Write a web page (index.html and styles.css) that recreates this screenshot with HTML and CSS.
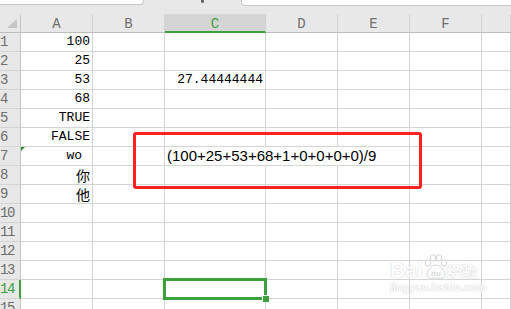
FILE: index.html
```html
<!DOCTYPE html>
<html lang="zh-CN">
<head>
    <meta charset="UTF-8">
    <title>表格</title>
    <link rel="stylesheet" href="styles.css">
</head>
<body>
    <div class="page">
        <!-- 顶部工具栏残留 -->
        <div class="topbar">
            <div class="tab tab-left"></div>
            <div class="caret"><span class="caret-dot"></span></div>
            <div class="tab tab-right"></div>
        </div>

        <!-- 表格区域 -->
        <div class="sheet">
            <div class="hd corner"><span class="tri"></span></div>
            <div class="hd">A</div>
            <div class="hd">B</div>
            <div class="hd hd-on">C</div>
            <div class="hd">D</div>
            <div class="hd">E</div>
            <div class="hd">F</div>
            <div class="hd"></div>

            <div class="rh">1</div><div class="c num">100</div><div class="c"></div><div class="c"></div><div class="c"></div><div class="c"></div><div class="c"></div><div class="c"></div>
            <div class="rh">2</div><div class="c num">25</div><div class="c"></div><div class="c"></div><div class="c"></div><div class="c"></div><div class="c"></div><div class="c"></div>
            <div class="rh">3</div><div class="c num">53</div><div class="c"></div><div class="c num">27.44444444</div><div class="c"></div><div class="c"></div><div class="c"></div><div class="c"></div>
            <div class="rh">4</div><div class="c num">68</div><div class="c"></div><div class="c"></div><div class="c"></div><div class="c"></div><div class="c"></div><div class="c"></div>
            <div class="rh">5</div><div class="c num">TRUE</div><div class="c"></div><div class="c"></div><div class="c"></div><div class="c"></div><div class="c"></div><div class="c"></div>
            <div class="rh">6</div><div class="c num">FALSE</div><div class="c"></div><div class="c"></div><div class="c"></div><div class="c"></div><div class="c"></div><div class="c"></div>
            <div class="rh">7</div><div class="c num wo"><span class="flag"></span>wo</div><div class="c"></div><div class="c formula">(100+25+53+68+1+0+0+0+0)/9</div><div class="c no-rb"></div><div class="c"></div><div class="c"></div><div class="c"></div>
            <div class="rh">8</div><div class="c num cjk">你</div><div class="c"></div><div class="c"></div><div class="c"></div><div class="c"></div><div class="c"></div><div class="c"></div>
            <div class="rh">9</div><div class="c num cjk">他</div><div class="c"></div><div class="c"></div><div class="c"></div><div class="c"></div><div class="c"></div><div class="c"></div>
            <div class="rh">10</div><div class="c"></div><div class="c"></div><div class="c"></div><div class="c"></div><div class="c"></div><div class="c"></div><div class="c"></div>
            <div class="rh">11</div><div class="c"></div><div class="c"></div><div class="c"></div><div class="c"></div><div class="c"></div><div class="c"></div><div class="c"></div>
            <div class="rh">12</div><div class="c"></div><div class="c"></div><div class="c"></div><div class="c"></div><div class="c"></div><div class="c"></div><div class="c"></div>
            <div class="rh">13</div><div class="c"></div><div class="c"></div><div class="c"></div><div class="c"></div><div class="c"></div><div class="c"></div><div class="c"></div>
            <div class="rh rh-on">14</div><div class="c"></div><div class="c"></div><div class="c"></div><div class="c"></div><div class="c"></div><div class="c"></div><div class="c"></div>
            <div class="rh">15</div><div class="c"></div><div class="c"></div><div class="c"></div><div class="c"></div><div class="c"></div><div class="c"></div><div class="c"></div>
        </div>

        <!-- 红色标注框 -->
        <div class="mark"></div>

        <!-- 选中单元格 C14 -->
        <div class="select"><span class="handle"></span></div>

        <!-- 水印 -->
        <div class="wm">
            <div class="wm-top">
                <span class="wm-bai">Bai</span>
                <svg class="wm-paw" width="24" height="26" viewBox="0 0 24 26">
                    <ellipse cx="5" cy="9" rx="2.6" ry="3.2"/>
                    <ellipse cx="10" cy="4" rx="2.6" ry="3.2"/>
                    <ellipse cx="16" cy="4" rx="2.6" ry="3.2"/>
                    <ellipse cx="21" cy="9" rx="2.6" ry="3.2"/>
                    <path d="M13 11 C8 11 3 18 4 22 C5 25 9 24 13 24 C17 24 21 25 22 22 C23 18 18 11 13 11 Z"/>
                    <text x="13" y="22" text-anchor="middle">du</text>
                </svg>
                <span class="wm-jy">经验</span>
            </div>
            <div class="wm-url">jingyan.baidu.com</div>
        </div>
    </div>
</body>
</html>
```

FILE: styles.css
```css
*{
    margin: 0;
    padding: 0;
    box-sizing: border-box;
}

body{
    background-color: #fff;
    overflow: hidden;
}

/* 整体容器 */
.page{
    position: relative;
    width: 511px;
    height: 309px;
    overflow: hidden;
    background-color: #fff;
}

/* 顶部条 */
.topbar{
    height: 14px;
    background-color: #e8e8e8;
    display: flex;
    align-items: flex-start;
}

.tab{
    height: 5px;
    background-color: #fff;
    border: 1px solid #c8c8c8;
    border-top: none;
}

.tab-left{
    width: 144px;
    border-left: none;
    border-radius: 0 0 4px 0;
}

/* 中间的小下拉标记 */
.caret{
    width: 97px;
    display: flex;
    justify-content: center;
}

.caret-dot{
    width: 3px;
    height: 3px;
    margin-left: 20px;
    border-radius: 0 0 2px 2px;
    background-color: #666;
}

.tab-right{
    flex: 1;
    height: 6px;
    border-right: none;
    border-radius: 0 0 0 4px;
}

/* 表格 */
.sheet{
    display: grid;
    grid-template-columns: 21px 72px 72px 101px 72px 72px 72px 1fr;
    grid-auto-rows: 19px;
    font-family: "Liberation Mono", monospace;
    font-size: 13px;
    color: #000;
}

/* 列标题 */
.hd{
    background-color: #e8e8e8;
    border-right: 1px solid #d2d2d2;
    border-bottom: 1px solid #bdbdbd;
    color: #6e6e6e;
    font-size: 14px;
    display: flex;
    align-items: center;
    justify-content: center;
    padding-top: 1px;
}

.hd-on{
    background-color: #d5d5d5;
    color: #3ca03c;
    border-bottom: 2px solid #3ca03c;
    padding-top: 2px;
}

.corner{
    position: relative;
    border-right-color: #c4c4c4;
}

.tri{
    position: absolute;
    right: 3px;
    bottom: 4px;
    width: 0;
    height: 0;
    border-left: 10px solid transparent;
    border-bottom: 9px solid #c6c6c6;
}

/* 行号 */
.rh{
    background-color: #e8e8e8;
    border-right: 1px solid #c4c4c4;
    border-bottom: 1px solid #d4d4d4;
    color: #6e6e6e;
    font-size: 14px;
    letter-spacing: -1.5px;
    display: flex;
    align-items: flex-end;
    padding: 0 0 1px 0;
}

.rh-on{
    color: #3ca03c;
    border-right: 2px solid #3ca03c;
}

/* 普通单元格 */
.c{
    border-right: 1px solid #d4d4d4;
    border-bottom: 1px solid #d4d4d4;
    display: flex;
    align-items: flex-end;
    padding: 0 2px 2px 2px;
    white-space: nowrap;
    position: relative;
}

.num{
    justify-content: flex-end;
}

.wo{
    padding-right: 10px;
}

.cjk{
    font-family: "Noto Sans CJK SC", sans-serif;
    font-size: 14px;
    line-height: 16px;
    padding-bottom: 1px;
}

/* 绿色三角 */
.flag{
    position: absolute;
    left: 0;
    top: 0;
    width: 0;
    height: 0;
    border-top: 4px solid #2e8b2e;
    border-right: 4px solid transparent;
}

.formula{
    overflow: visible;
    font-family: "Liberation Sans", sans-serif;
    font-size: 15px;
    padding-left: 2px;
    padding-bottom: 1px;
    border-right-color: transparent;
}

.no-rb{
    border-right-color: transparent;
}

/* 红框 */
.mark{
    position: absolute;
    left: 133px;
    top: 132px;
    width: 289px;
    height: 57px;
    border: 3px solid #fd2020;
    border-radius: 3px;
}

/* 选中框 */
.select{
    position: absolute;
    left: 163px;
    top: 278px;
    width: 104px;
    height: 22px;
    border: 3px solid #3ca03c;
}

.handle{
    position: absolute;
    right: -5px;
    bottom: -5px;
    width: 7px;
    height: 7px;
    background-color: #3ca03c;
    border: 1px solid #fff;
    border-right: none;
    border-bottom: none;
}

/* 水印 */
.wm{
    position: absolute;
    left: 390px;
    top: 254px;
    color: #fff;
    font-family: "Liberation Sans", sans-serif;
    opacity: 0.9;
}

.wm-top{
    display: flex;
    align-items: flex-end;
}

.wm-bai{
    font-size: 21px;
    font-weight: bold;
    line-height: 20px;
    text-shadow: 0 0 1px #c8c8c8, 0 0 1px #c8c8c8;
}

.wm-paw{
    fill: #fff;
    stroke: #cfcfcf;
    stroke-width: 1;
}

.wm-paw text{
    font: bold 8px "Liberation Sans", sans-serif;
    fill: #d4d4d4;
    stroke: none;
}

.wm-jy{
    font-family: "Noto Sans CJK SC", sans-serif;
    font-size: 15px;
    font-weight: bold;
    line-height: 18px;
    text-shadow: 0 0 1px #c8c8c8, 0 0 1px #c8c8c8;
}

.wm-url{
    font-size: 11px;
    font-weight: bold;
    line-height: 14px;
    text-shadow: 0 0 1px #c8c8c8, 0 0 1px #c8c8c8;
}
```
